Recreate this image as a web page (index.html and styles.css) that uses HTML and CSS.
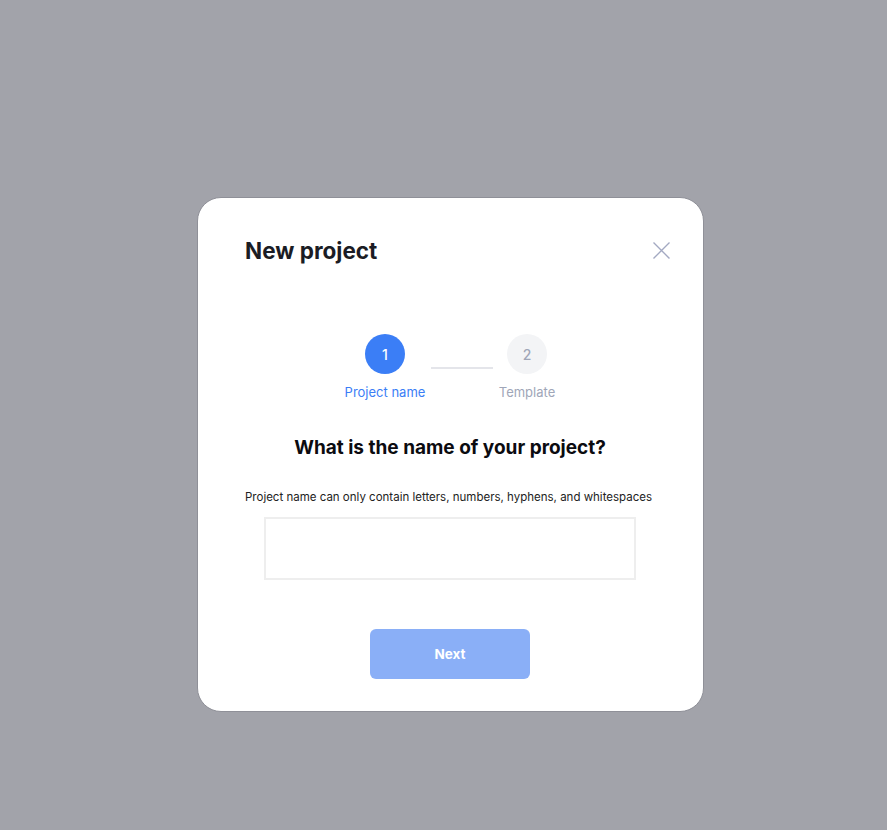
FILE: index.html
```html
<!DOCTYPE html>
<html lang="en">
<head>
  <meta charset="utf-8">
  <title>New project</title>
  <link rel="stylesheet" href="styles.css">
</head>
<body>
  <div class="overlay">
    <div class="modal">
      <div class="modalHeader">
        <h2>New project</h2>
        <button class="closeBtn" aria-label="Close">
          <svg width="17" height="17" viewBox="0 0 17 17"><path d="M0.5 0.5L16.5 16.5M16.5 0.5L0.5 16.5" stroke="#a3a9c2" stroke-width="1.4" fill="none"/></svg>
        </button>
      </div>

      <div class="stepper">
        <div class="step active">
          <div class="stepCircle">1</div>
          <div class="stepLabel">Project name</div>
        </div>
        <div class="stepLine"></div>
        <div class="step">
          <div class="stepCircle">2</div>
          <div class="stepLabel">Template</div>
        </div>
      </div>

      <h3 class="question">What is the name of your project?</h3>
      <p class="hint">Project name can only contain letters, numbers, hyphens, and whitespaces</p>
      <input class="nameInput" type="text">

      <div class="actions">
        <button class="nextBtn" disabled>Next</button>
      </div>
    </div>
  </div>
</body>
</html>
```

FILE: styles.css
```css
body {
  margin: 0;
  padding: 0;
  font-family: Inter, "Noto Sans", sans-serif;
}

.overlay {
  background-color: #a2a3aa;
  height: 830px;
  display: flex;
  padding: 197px 0 0 197px;
  box-sizing: border-box;
}

.modal {
  background-color: white;
  border: 1px solid #8f9098;
  border-radius: 24px;
  width: 507px;
  height: 515px;
  box-sizing: border-box;
  padding: 36px 48px 0 47px;
}

.modalHeader {
  display: flex;
  justify-content: space-between;
  align-items: center;
  height: 32px;
  margin-right: -15px;
}

.modalHeader h2 {
  margin: 0;
  font-size: 22.5px;
  font-weight: 700;
  color: #1b1c24;
}

.closeBtn {
  background: none;
  border: none;
  padding: 0;
  width: 17px;
  height: 17px;
}

.stepper {
  display: flex;
  justify-content: center;
  margin-top: 68px;
  margin-left: 12px;
}

.step {
  display: flex;
  flex-direction: column;
  align-items: center;
  width: 90px;
}

.stepCircle {
  width: 40px;
  height: 40px;
  border-radius: 50%;
  background-color: #f3f4f6;
  color: #a0a6b8;
  display: flex;
  align-items: center;
  justify-content: center;
  font-size: 14px;
  font-weight: 500;
}

.step.active .stepCircle {
  background-color: #3b7ef6;
  color: white;
}

.stepLabel {
  margin-top: 10px;
  font-size: 13px;
  color: #a0a6b8;
}

.step.active .stepLabel {
  color: #3b7ef6;
}

.stepLine {
  width: 62px;
  height: 2px;
  background-color: #e4e5ea;
  margin: 33px -11px 0 1px;
}

.question {
  margin: 36px 0 0;
  text-align: center;
  font-size: 19px;
  font-weight: 700;
  color: #0b0b10;
}

.hint {
  margin: 31px 0 0;
  font-size: 11.5px;
  color: #222;
  white-space: nowrap;
}

.nameInput {
  display: block;
  width: 372px;
  height: 63px;
  box-sizing: border-box;
  border: 2px solid #eeeeee;
  margin: 13px auto 0;
  outline: none;
}

.actions {
  display: flex;
  justify-content: center;
  margin-top: 49px;
}

.nextBtn {
  width: 160px;
  height: 50px;
  border: none;
  border-radius: 6px;
  background-color: #8aaff7;
  color: white;
  font-family: inherit;
  font-size: 13.5px;
  font-weight: 700;
}
```
